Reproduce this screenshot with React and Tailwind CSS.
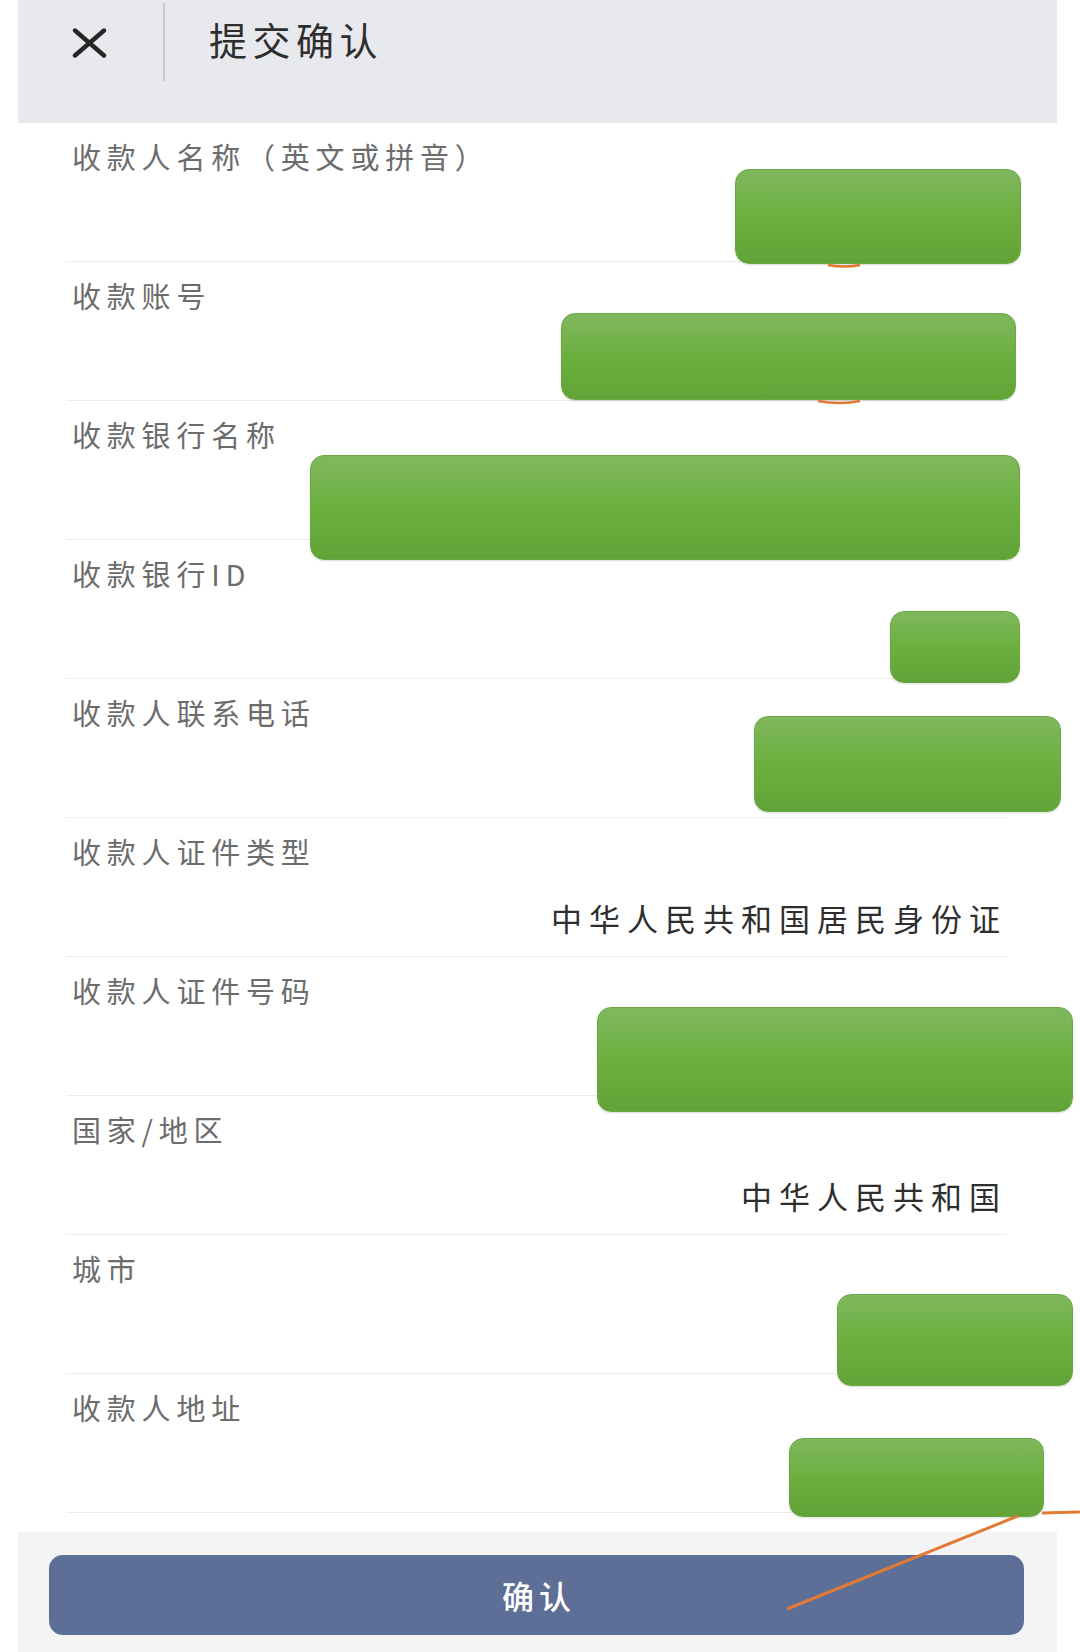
import React from "react";

const rows = [
  { label: "收款人名称（英文或拼音）" },
  { label: "收款账号" },
  { label: "收款银行名称" },
  { label: "收款银行ID" },
  { label: "收款人联系电话" },
  { label: "收款人证件类型", value: "中华人民共和国居民身份证" },
  { label: "收款人证件号码" },
  { label: "国家/地区", value: "中华人民共和国" },
  { label: "城市" },
  { label: "收款人地址" },
];

// redaction boxes laid over the values
const masks = [
  { left: 735, top: 169, width: 286, height: 95 },
  { left: 561, top: 313, width: 455, height: 87 },
  { left: 310, top: 455, width: 710, height: 105 },
  { left: 890, top: 611, width: 130, height: 72 },
  { left: 754, top: 716, width: 307, height: 96 },
  { left: 597, top: 1007, width: 476, height: 105 },
  { left: 837, top: 1294, width: 236, height: 92 },
  { left: 789, top: 1438, width: 255, height: 79 },
];

const font = { fontFamily: '"Noto Sans CJK SC", "Noto Sans", sans-serif' };

const Row = ({ label, value }) => (
  <div className="ml-[66px] w-[941px] h-[139px] border-b border-[#ececec] flex flex-col justify-between">
    <div className="pl-[6px] pt-[19px] text-[29px] leading-[29px] tracking-[5.8px] text-[#6c6c6c]">
      {label}
    </div>
    {value && (
      <div className="self-end pb-[23px] text-[31px] leading-[31px] tracking-[7px] text-[#2e2e2e]">
        {value}
      </div>
    )}
  </div>
);

export default function App() {
  return (
    <div className="relative w-[1080px] h-[1652px] bg-white overflow-hidden" style={font}>
      <div className="ml-[18px] w-[1039px] h-[123px] bg-[#e8e9ec] flex items-start">
        <svg className="ml-[54px] mt-[28px]" width="35" height="30" viewBox="0 0 35 30">
          <path d="M3 2.5 L32 27.5 M32 2.5 L3 27.5" stroke="#262626" strokeWidth="4.4" strokeLinecap="round" fill="none" />
        </svg>
        <div className="ml-[56px] mt-[3px] w-[2px] h-[78px] bg-[#c9c9cc]" />
        <div className="ml-[44px] mt-[20px] text-[38px] leading-[38px] tracking-[5.5px] text-[#2e2e2e]">
          提交确认
        </div>
      </div>

      {rows.map((r) => (
        <Row key={r.label} label={r.label} value={r.value} />
      ))}

      <div className="mt-[19px] ml-[18px] w-[1039px] h-[120px] bg-[#f4f4f5] pt-[23px] pl-[31px]">
        <button className="w-[975px] h-[80px] rounded-[14px] bg-[#5d6f96] text-white text-[32px] font-medium tracking-[5px] pl-[5px]">
          确认
        </button>
      </div>

      {masks.map((m, i) => (
        <div
          key={i}
          className="absolute rounded-[14px] border border-[#6aa845] bg-gradient-to-b from-[#7fb85e] via-[#6daf3e] to-[#62a338] shadow-[0_1px_2px_rgba(0,0,0,0.15)]"
          style={{ left: m.left, top: m.top, width: m.width, height: m.height }}
        />
      ))}

      <svg className="absolute left-0 top-0 pointer-events-none" width="1080" height="1652">
        <path d="M787 1609 L1018 1516" stroke="#e27a35" strokeWidth="3" fill="none" />
        <path d="M1042 1513 L1080 1512" stroke="#e27a35" strokeWidth="3" fill="none" />
        <path d="M828 265 Q845 268 860 265" stroke="#e27a35" strokeWidth="2.5" fill="none" />
        <path d="M818 401 Q840 405 860 401" stroke="#e27a35" strokeWidth="2.5" fill="none" />
      </svg>
    </div>
  );
}
